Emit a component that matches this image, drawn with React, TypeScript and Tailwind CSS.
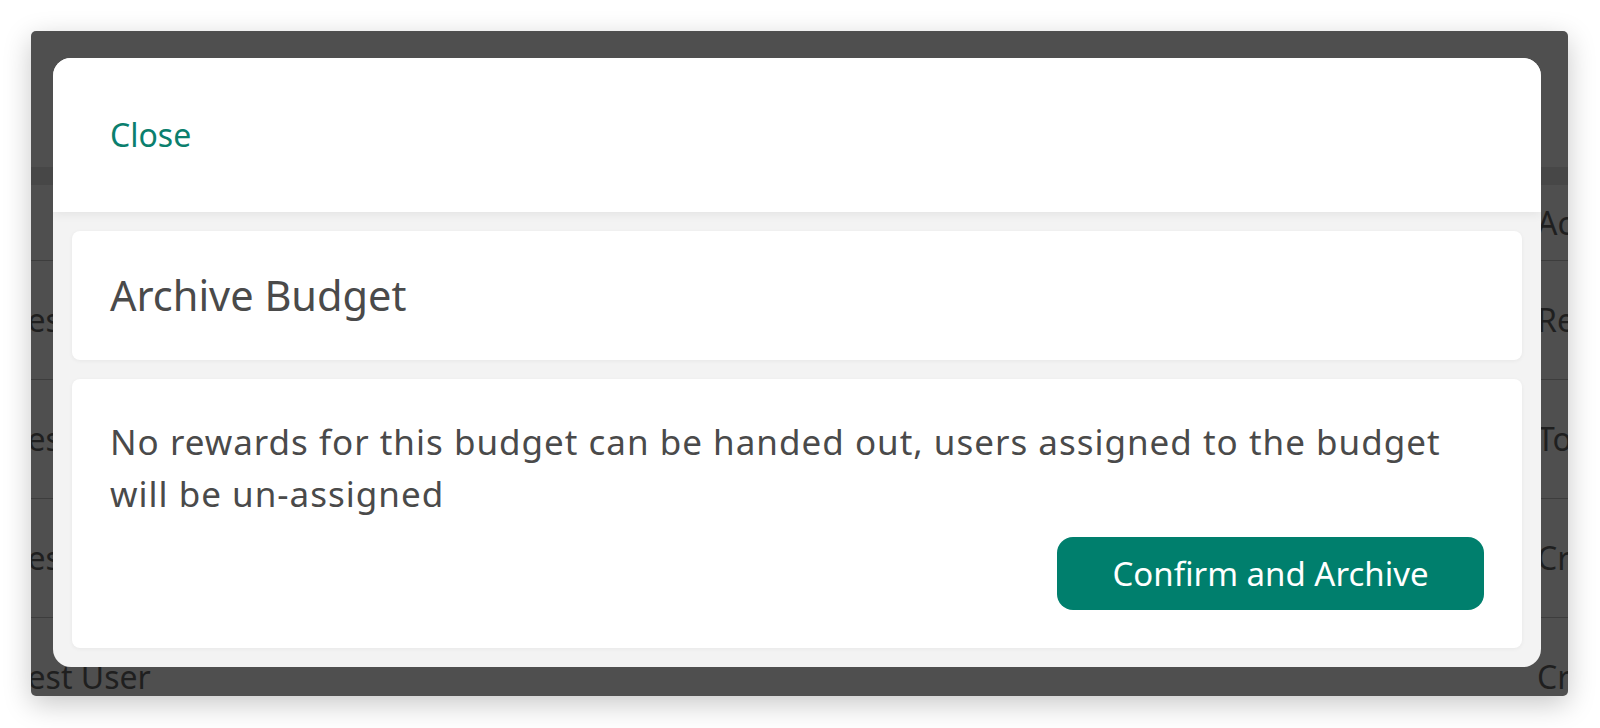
import React from 'react'

const rows = [
  { name: 'Test User', action: 'Remove' },
  { name: 'Test User', action: 'Top up' },
  { name: 'Test User', action: 'Create' },
  { name: 'Test User', action: 'Create' },
]

// dimmed page that sits behind the modal
function BackgroundTable() {
  return (
    <div className="flex flex-col text-[32px] text-[#1f1f1f]">
      <div className="h-[136px]" />
      <div className="h-[18px] bg-[#474747]" />
      <div className="h-[76px] flex items-center border-b border-[#3d3d3d]">
        <div className="flex-1" />
        <div className="w-[31px] whitespace-nowrap">Actions</div>
      </div>
      {rows.map((row, i) => (
        <div key={i} className="h-[119px] shrink-0 flex items-center border-b border-[#3d3d3d]">
          <div className="flex-1 -ml-[19px] whitespace-nowrap">{row.name}</div>
          <div className="w-[31px] whitespace-nowrap">{row.action}</div>
        </div>
      ))}
    </div>
  )
}

function ArchiveModal() {
  return (
    <div className="absolute left-[22px] top-[27px] w-[1488px] h-[609px] rounded-[18px] bg-[#f3f3f3] overflow-hidden flex flex-col">
      {/* header */}
      <div className="relative z-10 h-[154px] shrink-0 bg-white flex items-center px-[57px] shadow-[0_2px_10px_rgba(0,0,0,0.07)]">
        <button className="text-[32px] text-[#0b7f6e] cursor-pointer">Close</button>
      </div>

      {/* content */}
      <div className="flex-1 flex flex-col gap-[19px] p-[19px]">
        <div className="h-[129px] shrink-0 bg-white rounded-[8px] shadow-[0_1px_4px_rgba(0,0,0,0.05)] flex items-center px-[38px]">
          <h2 className="text-[41.5px] text-[#4a4a4a]">Archive Budget</h2>
        </div>

        <div className="flex-1 bg-white rounded-[8px] shadow-[0_1px_4px_rgba(0,0,0,0.05)] px-[38px] pt-[37px] pb-[38px]">
          <p className="text-[35px] leading-[52px] tracking-[1px] text-[#4a4a4a]">
            No rewards for this budget can be handed out, users assigned to the budget will be un-assigned
          </p>
          <div className="flex justify-end mt-[17px]">
            <button className="w-[427px] h-[73px] rounded-[16px] bg-[#007f6d] text-white text-[33px] cursor-pointer">
              Confirm and Archive
            </button>
          </div>
        </div>
      </div>
    </div>
  )
}

export default function App() {
  return (
    <div className="w-[1600px] h-[728px] bg-white pt-[31px] pl-[31px] font-['Noto_Sans',sans-serif]">
      <div className="relative w-[1537px] h-[665px] overflow-hidden rounded-[5px] bg-[#4f4f4f] shadow-[0_8px_28px_rgba(0,0,0,0.22)]">
        <BackgroundTable />
        <ArchiveModal />
      </div>
    </div>
  )
}
